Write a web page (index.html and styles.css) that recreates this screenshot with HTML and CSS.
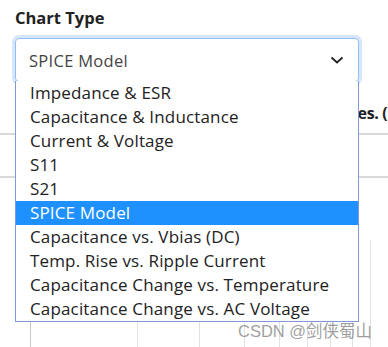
FILE: index.html
```html
<!DOCTYPE html>
<html lang="en">
<head>
  <meta charset="UTF-8">
  <title>Chart Type</title>
  <link rel="stylesheet" href="styles.css">
</head>
<body>
  <div class="panel">
    <label class="field-label">Chart Type</label>

    <div class="select-wrap">
      <div class="select">
        <span>SPICE Model</span>
        <svg class="chevron" width="14" height="8" viewBox="0 0 14 8">
          <path d="M1.5 1.5 L7 6.5 L12.5 1.5" fill="none" stroke="#222" stroke-width="1.8"/>
        </svg>
      </div>

      <!-- open option list -->
      <ul class="options">
        <li>Impedance &amp; ESR</li>
        <li>Capacitance &amp; Inductance</li>
        <li>Current &amp; Voltage</li>
        <li>S11</li>
        <li>S21</li>
        <li class="selected">SPICE Model</li>
        <li>Capacitance vs. Vbias (DC)</li>
        <li>Temp. Rise vs. Ripple Current</li>
        <li>Capacitance Change vs. Temperature</li>
        <li>Capacitance Change vs. AC Voltage</li>
      </ul>
    </div>

    <p class="hint">Click legend to toggle the displayed part curves. (max 5)</p>

    <div class="table-rows">
      <div class="row first"></div>
      <div class="row"></div>
    </div>

    <svg class="chart" width="388" height="110" viewBox="0 0 388 110">
      <line x1="30.5" y1="0" x2="30.5" y2="110" stroke="#c8c8c8"/>
      <line x1="137.5" y1="0" x2="137.5" y2="110" stroke="#e2e2e2"/>
      <line x1="199.5" y1="0" x2="199.5" y2="110" stroke="#e2e2e2"/>
      <line x1="244.5" y1="0" x2="244.5" y2="110" stroke="#e2e2e2"/>
      <line x1="279.5" y1="0" x2="279.5" y2="110" stroke="#e2e2e2"/>
      <line x1="307.5" y1="0" x2="307.5" y2="110" stroke="#e2e2e2"/>
      <line x1="330.5" y1="0" x2="330.5" y2="110" stroke="#e2e2e2"/>
      <line x1="352.5" y1="0" x2="352.5" y2="110" stroke="#e2e2e2"/>
      <line x1="370.5" y1="0" x2="370.5" y2="110" stroke="#e2e2e2"/>
    </svg>
  </div>

  <div class="watermark">CSDN @剑侠蜀山</div>
</body>
</html>
```

FILE: styles.css
```css
body {
  margin: 0;
  font-family: "Open Sans", "Noto Sans CJK SC", sans-serif;
  background: #fff;
  color: #222;
  overflow: hidden;
}

.panel {
  padding: 6px 0 0 15px;
  position: relative;
}

.field-label {
  display: block;
  font-size: 16.5px;
  font-weight: 700;
  line-height: 24px;
  color: #222;
}

.select-wrap {
  position: relative;
  width: 344px;
  margin-top: 8px;
}

.select {
  height: 42px;
  border: 1px solid #8fbdf7;
  border-radius: 4px;
  box-shadow: 0 0 0 3px #d6e7fd;
  display: flex;
  align-items: center;
  justify-content: space-between;
  padding: 0 14px 0 13px;
  font-size: 16.5px;
  letter-spacing: 0.3px;
  color: #444;
}

.chevron {
  display: block;
}

.options {
  position: absolute;
  top: 43px;
  left: 0;
  width: 342px;
  margin: 0;
  padding: 0;
  list-style: none;
  background: #fff;
  border: 1px solid #7f9ad6;
  border-top: none;
  z-index: 5;
}

.options li {
  height: 24px;
  line-height: 24px;
  padding-left: 14px;
  font-size: 17px;
  letter-spacing: 0.15px;
  color: #222;
  white-space: nowrap;
}

.options li.selected {
  background: #1e90ff;
  color: #fff;
}

.hint {
  margin: 20px 0 0;
  line-height: 22px;
  font-size: 16px;
  font-weight: 700;
  letter-spacing: -0.36px;
  white-space: nowrap;
  color: #222;
}

.table-rows {
  margin-left: -15px;
}

.row {
  height: 41px;
  border-bottom: 2px solid #d9d9d9;
}

.row.first {
  height: 9px;
}

.chart {
  display: block;
  margin: 62px 0 0 -15px;
}

.watermark {
  position: absolute;
  left: 238px;
  top: 318px;
  font-family: "Liberation Sans", "Noto Sans CJK SC", sans-serif;
  font-size: 16.5px;
  color: rgba(120, 120, 120, 0.72);
}
```
